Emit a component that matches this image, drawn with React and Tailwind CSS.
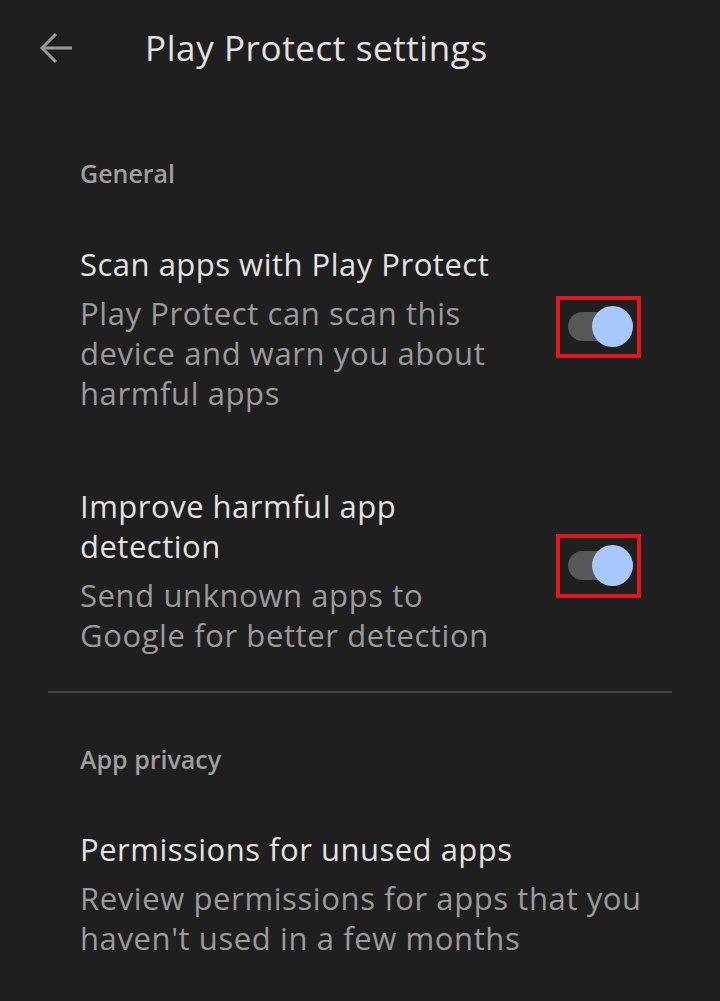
import React from "react";

const font = { fontFamily: "'Open Sans', Roboto, sans-serif" };

const Toggle = ({ className = "" }) => (
  <div
    className={`w-[85px] h-[62px] border-[4px] border-[#e0161e] shrink-0 flex items-center ${className}`}
  >
    <div className="relative ml-[8px] w-[52px] h-[29px] rounded-full bg-[#575757]">
      <div className="absolute right-[-13px] top-[-6px] w-[41px] h-[41px] rounded-full bg-[#a8c7fa]" />
    </div>
  </div>
);

const SettingRow = ({ title, desc, toggleClass }) => (
  <div className="flex items-center justify-between">
    <div className="flex flex-col max-w-[430px]">
      <div className="text-[31px] leading-[40px] tracking-[0.5px] text-[#e3e3e3]">
        {title}
      </div>
      <div className="mt-[9px] text-[31px] leading-[40px] tracking-[0.6px] text-[#9a9a9a]">
        {desc}
      </div>
    </div>
    <Toggle className={toggleClass} />
  </div>
);

export default function App() {
  return (
    <div className="w-[720px] h-[1001px] bg-[#1f1f1f] overflow-hidden" style={font}>
      <div className="h-[96px] flex items-center">
        <svg
          className="ml-[40px]"
          width="33"
          height="32"
          viewBox="0 0 33 32"
          fill="none"
          stroke="#9a9a9a"
          strokeWidth="3"
        >
          <path d="M32 16H3" />
          <path d="M16 2L2 16l14 14" />
        </svg>
        <div className="ml-[72px] text-[35px] tracking-[0.6px] text-[#e3e3e3]">
          Play Protect settings
        </div>
      </div>

      <div className="pl-[80px] pr-[79px]">
        <div className="mt-[61px] text-[25px] leading-[32px] font-semibold text-[#9e9e9e]">
          General
        </div>
        <div className="mt-[55px]">
          <SettingRow
            title="Scan apps with Play Protect"
            desc="Play Protect can scan this device and warn you about harmful apps"
            toggleClass="mb-[4px]"
          />
        </div>
        <div className="mt-[73px]">
          <SettingRow
            title="Improve harmful app detection"
            desc="Send unknown apps to Google for better detection"
            toggleClass="mb-[10px] h-[64px]"
          />
        </div>
      </div>

      <div className="mx-[48px] mt-[36px] h-[2px] bg-[#444444]" />

      <div className="pl-[80px] pr-[56px]">
        <div className="mt-[50px] text-[25px] leading-[32px] font-semibold text-[#9e9e9e]">
          App privacy
        </div>
        <div className="mt-[54px] flex flex-col">
          <div className="text-[31px] leading-[40px] tracking-[0.5px] text-[#e3e3e3]">
            Permissions for unused apps
          </div>
          <div className="mt-[9px] text-[31px] leading-[40px] tracking-[0.6px] text-[#9a9a9a]">
            Review permissions for apps that you haven't used in a few months
          </div>
        </div>
      </div>
    </div>
  );
}
